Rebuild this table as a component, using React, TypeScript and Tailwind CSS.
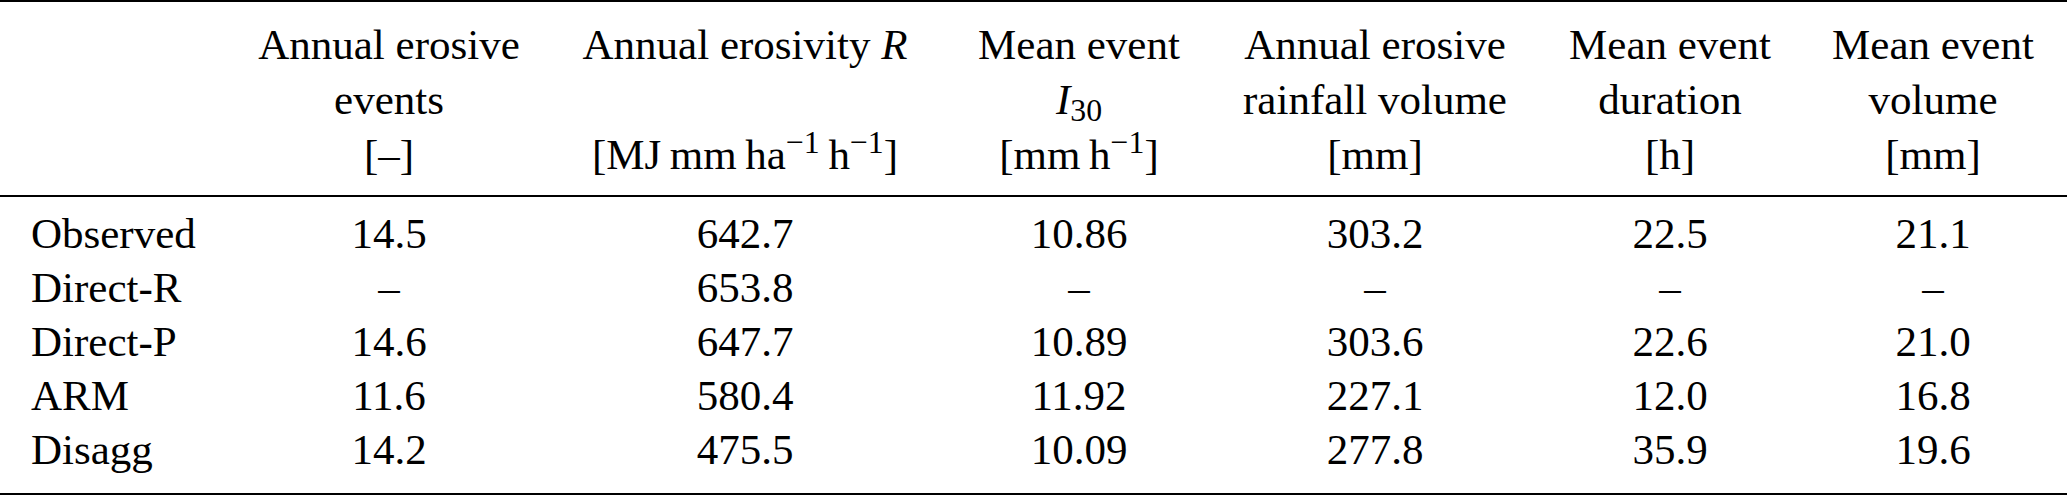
import type { ReactNode } from "react"

type Row = {
  label: string
  values: string[]
}

const rows: Row[] = [
  { label: "Observed", values: ["14.5", "642.7", "10.86", "303.2", "22.5", "21.1"] },
  { label: "Direct-R", values: ["–", "653.8", "–", "–", "–", "–"] },
  { label: "Direct-P", values: ["14.6", "647.7", "10.89", "303.6", "22.6", "21.0"] },
  { label: "ARM", values: ["11.6", "580.4", "11.92", "227.1", "12.0", "16.8"] },
  { label: "Disagg", values: ["14.2", "475.5", "10.09", "277.8", "35.9", "19.6"] }
]

const cols = "grid grid-cols-[220px_338px_374px_294px_298px_292px_234px]"

function Sup({ children }: { children: ReactNode }) {
  return <sup className="text-[0.74em] top-[-0.5em]">{children}</sup>
}

const header: ReactNode[][] = [
  [
    "",
    "Annual erosive",
    <>
      Annual erosivity <i>R</i>
    </>,
    "Mean event",
    "Annual erosive",
    "Mean event",
    "Mean event"
  ],
  [
    "",
    "events",
    "",
    <>
      <i>I</i>
      <sub className="text-[0.74em] bottom-[-0.22em]">30</sub>
    </>,
    "rainfall volume",
    "duration",
    "volume"
  ],
  [
    "",
    "[–]",
    <>
      [MJ{"\u2009"}mm{"\u2009"}ha<Sup>−1</Sup>
      {"\u2009"}h<Sup>−1</Sup>]
    </>,
    <>
      [mm{"\u2009"}h<Sup>−1</Sup>]
    </>,
    "[mm]",
    "[h]",
    "[mm]"
  ]
]

export default function App() {
  return (
    <div className="w-[2067px] bg-white font-['Liberation_Serif',serif] text-[43px] text-black">
      <div className="h-[2px] bg-black" />

      <div className={`${cols} pt-[15px] pb-[13px] leading-[55px]`}>
        {header.map((line, r) =>
          line.map((cell, c) => (
            <div key={`${r}-${c}`} className="whitespace-nowrap text-center">
              {cell}
            </div>
          ))
        )}
      </div>

      <div className="h-[2px] bg-black" />

      <div className={`${cols} pt-[9.5px] pb-[16.5px] leading-[54px]`}>
        {rows.map((row) => (
          <div key={row.label} className="contents">
            <div className="whitespace-nowrap pl-[31px]">{row.label}</div>
            {row.values.map((v, i) => (
              <div key={i} className="whitespace-nowrap text-center">
                {v}
              </div>
            ))}
          </div>
        ))}
      </div>

      <div className="h-[2px] bg-black" />
    </div>
  )
}
